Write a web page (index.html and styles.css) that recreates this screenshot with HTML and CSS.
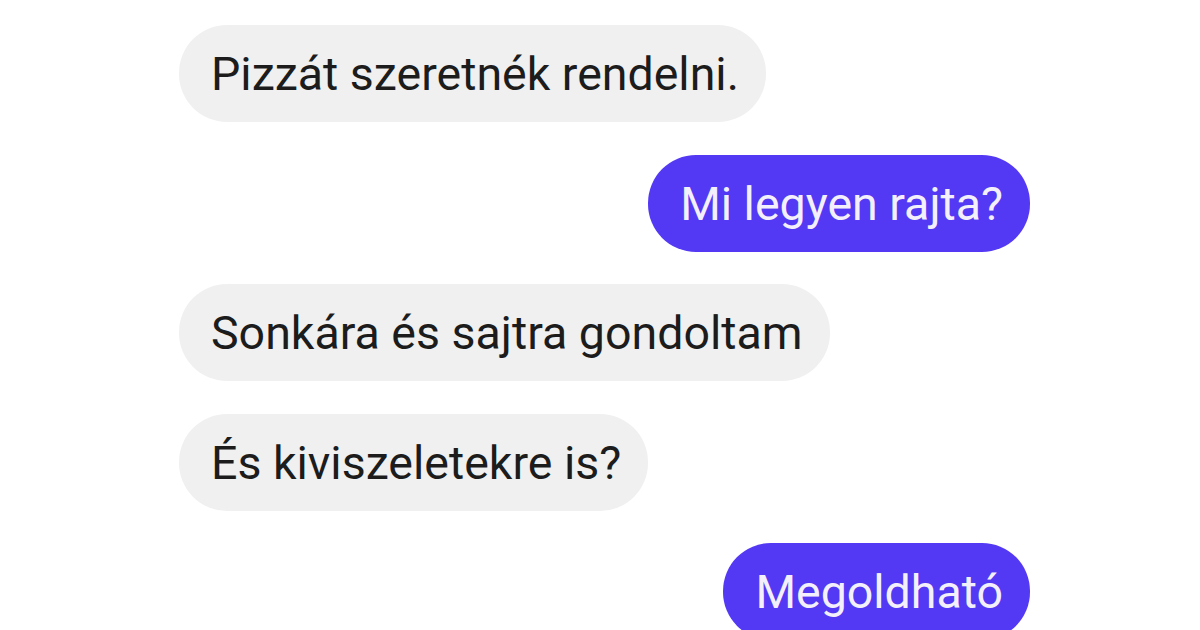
FILE: index.html
```html
<!DOCTYPE html>
<html lang="hu">
<head>
<meta charset="utf-8">
<link rel="stylesheet" href="styles.css">
</head>
<body>
<div class="chat">
  <div class="msg in">Pizzát szeretnék rendelni.</div>
  <div class="msg out">Mi legyen rajta?</div>
  <div class="msg in">Sonkára és sajtra gondoltam</div>
  <div class="msg in">És kiviszeletekre is?</div>
  <div class="msg out">Megoldható</div>
</div>
</body>
</html>
```
FILE: styles.css
```css
html, body {
  margin: 0;
  padding: 0;
  background: #ffffff;
  width: 1200px;
  height: 630px;
  overflow: hidden;
}
.chat {
  display: flex;
  flex-direction: column;
  gap: 32.5px;
  padding: 25px 170px 0 179px;
  font-family: Roboto, "Noto Sans", sans-serif;
}
.msg {
  height: 97px;
  box-sizing: border-box;
  display: flex;
  align-items: center;
  padding: 2px 27px 0 32px;
  border-radius: 48px;
  font-size: 46.5px;
  line-height: 1;
  letter-spacing: 0;
}
.in {
  align-self: flex-start;
  background: #f0f0f0;
  color: #1c1c1c;
}
.out {
  align-self: flex-end;
  background: #5338f4;
  color: #f4f0fb;
}
```
